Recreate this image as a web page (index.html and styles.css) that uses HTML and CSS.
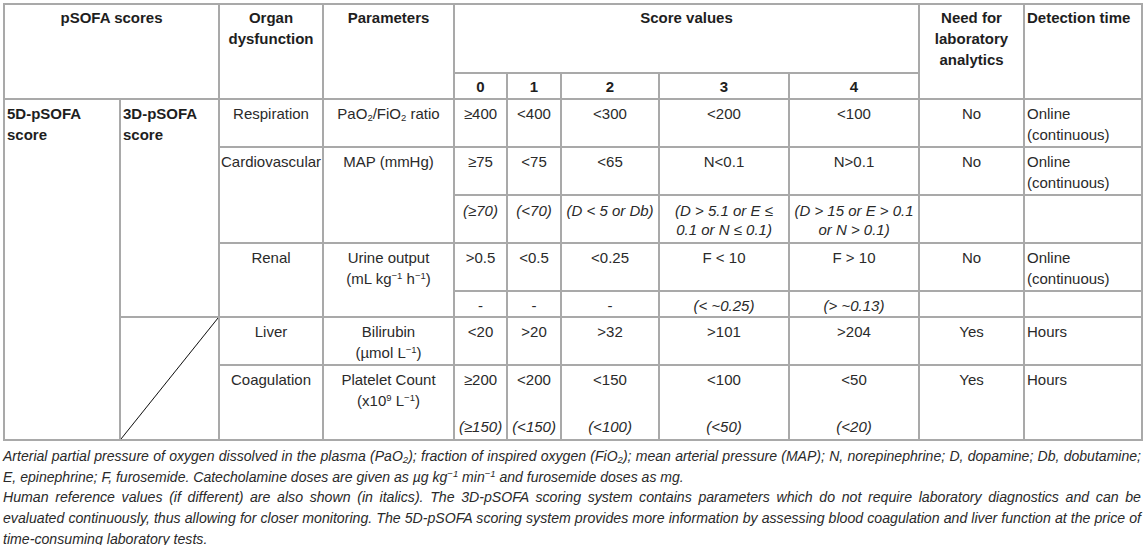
FILE: index.html
```html
<!DOCTYPE html>
<html>
<head>
<meta charset="utf-8">
<link rel="stylesheet" href="styles.css">
</head>
<body>
<table class="sofa">
  <colgroup>
    <col class="c-5d"><col class="c-3d"><col class="c-organ"><col class="c-param">
    <col class="c-s0"><col class="c-s1"><col class="c-s2"><col class="c-s3"><col class="c-s4">
    <col class="c-need"><col class="c-det">
  </colgroup>
  <thead>
    <tr class="h-top">
      <th colspan="2" rowspan="2">pSOFA scores</th>
      <th rowspan="2">Organ<br>dysfunction</th>
      <th rowspan="2">Parameters</th>
      <th colspan="5">Score values</th>
      <th rowspan="2">Need for<br>laboratory<br>analytics</th>
      <th rowspan="2" class="left">Detection time</th>
    </tr>
    <tr class="h-sub">
      <th>0</th><th>1</th><th>2</th><th>3</th><th>4</th>
    </tr>
  </thead>
  <tbody>
    <tr class="r-main">
      <td rowspan="8" class="label">5D-pSOFA<br>score</td>
      <td rowspan="5" class="label">3D-pSOFA<br>score</td>
      <td>Respiration</td>
      <td>PaO<sub>2</sub>/FiO<sub>2</sub> ratio</td>
      <td>&ge;400</td><td>&lt;400</td><td>&lt;300</td><td>&lt;200</td><td>&lt;100</td>
      <td>No</td>
      <td class="left">Online<br>(continuous)</td>
    </tr>
    <tr class="r-main">
      <td rowspan="2">Cardiovascular</td>
      <td rowspan="2">MAP (mmHg)</td>
      <td>&ge;75</td><td>&lt;75</td><td>&lt;65</td><td>N&lt;0.1</td><td>N&gt;0.1</td>
      <td>No</td>
      <td class="left">Online<br>(continuous)</td>
    </tr>
    <tr class="r-ital">
      <td class="it">(&ge;70)</td><td class="it">(&lt;70)</td><td class="it">(D &lt; 5 or Db)</td>
      <td class="it">(D &gt; 5.1 or E &le;<br>0.1 or N &le; 0.1)</td>
      <td class="it">(D &gt; 15 or E &gt; 0.1<br>or N &gt; 0.1)</td>
      <td></td><td></td>
    </tr>
    <tr class="r-main">
      <td rowspan="2">Renal</td>
      <td rowspan="2">Urine output<br>(mL kg<sup>&minus;1</sup> h<sup>&minus;1</sup>)</td>
      <td>&gt;0.5</td><td>&lt;0.5</td><td>&lt;0.25</td><td>F &lt; 10</td><td>F &gt; 10</td>
      <td>No</td>
      <td class="left">Online<br>(continuous)</td>
    </tr>
    <tr class="r-short">
      <td>-</td><td>-</td><td>-</td>
      <td class="it">(&lt; ~0.25)</td><td class="it">(&gt; ~0.13)</td>
      <td></td><td></td>
    </tr>
    <tr class="r-main">
      <td rowspan="3" class="diag"></td>
      <td>Liver</td>
      <td>Bilirubin<br>(&micro;mol L<sup>&minus;1</sup>)</td>
      <td>&lt;20</td><td>&gt;20</td><td>&gt;32</td><td>&gt;101</td><td>&gt;204</td>
      <td>Yes</td>
      <td class="left">Hours</td>
    </tr>
    <tr class="r-coag">
      <td rowspan="2">Coagulation</td>
      <td rowspan="2">Platelet Count<br>(x10<sup>9</sup> L<sup>&minus;1</sup>)</td>
      <td class="open">&ge;200</td><td class="open">&lt;200</td><td class="open">&lt;150</td><td class="open">&lt;100</td><td class="open">&lt;50</td>
      <td rowspan="2">Yes</td>
      <td rowspan="2" class="left">Hours</td>
    </tr>
    <tr class="r-short">
      <td class="it cont">(&ge;150)</td><td class="it cont">(&lt;150)</td><td class="it cont">(&lt;100)</td><td class="it cont">(&lt;50)</td><td class="it cont">(&lt;20)</td>
    </tr>
  </tbody>
</table>
<div class="notes">
  <p>Arterial partial pressure of oxygen dissolved in the plasma (PaO<sub>2</sub>); fraction of inspired oxygen (FiO<sub>2</sub>); mean arterial pressure (MAP); N, norepinephrine; D, dopamine; Db, dobutamine; E, epinephrine; F, furosemide. Catecholamine doses are given as &micro;g kg<sup>&minus;1</sup> min<sup>&minus;1</sup> and furosemide doses as mg.</p>
  <p class="p2">Human reference values (if different) are also shown (in italics). The 3D-pSOFA scoring system contains parameters which do not require laboratory diagnostics and can be evaluated continuously, thus allowing for closer monitoring. The 5D-pSOFA scoring system provides more information by assessing blood coagulation and liver function at the price of <span class="nw">time-consuming</span> laboratory tests.</p>
</div>
</body>
</html>
```

FILE: styles.css
```css
html, body {
  margin: 0;
  padding: 0;
  background: #ffffff;
}
body {
  padding: 3px 4px 0 3px;
  font-family: "Liberation Sans", Arial, sans-serif;
  color: #2a2a2a;
}
.sofa {
  border-collapse: collapse;
  table-layout: fixed;
  width: 1138px;
  font-size: 15px;
  line-height: 21px;
}
.c-5d { width: 116px; }
.c-3d { width: 99px; }
.c-organ { width: 104px; }
.c-param { width: 131px; }
.c-s0 { width: 53px; }
.c-s1 { width: 54px; }
.c-s2 { width: 98px; }
.c-s3 { width: 130px; }
.c-s4 { width: 130px; }
.c-need { width: 105px; }
.c-det { width: 118px; }
.sofa th, .sofa td {
  border: 2px solid #a9a9a9;
  padding: 3px 1px 0 1px;
  vertical-align: top;
  text-align: center;
  overflow: visible;
  white-space: nowrap;
}
.sofa th {
  font-weight: bold;
  color: #1e1e1e;
  padding-top: 2px;
}
.h-top { height: 69px; }
.h-sub { height: 26px; }
.h-sub th { padding-top: 2px; }
.r-main { height: 48px; }
.r-ital { height: 48px; }
.r-coag { height: 50px; }
.r-short { height: 25px; }
.r-ital td { padding-top: 5px; line-height: 19px; }
.sofa .left { text-align: left; padding-left: 2px; }
.sofa .label {
  text-align: left;
  font-weight: bold;
  padding-left: 2px;
  color: #1e1e1e;
}
.it { font-style: italic; }
.sofa td.open { border-bottom: none; }
.sofa td.cont { border-top: none; padding-top: 1px; }
.diag {
  background: linear-gradient(to bottom right, transparent calc(50% - 0.8px), #111 50%, transparent calc(50% + 0.8px));
}
sub, sup {
  font-size: 9.5px;
  line-height: 0;
}
sub { vertical-align: -2px; }
sup { vertical-align: 5px; }
.notes {
  font-style: italic;
  font-size: 14.05px;
  line-height: 20.7px;
  text-align: justify;
  color: #2a2a2a;
  padding-top: 5px;
  width: 1138px;
}
.notes p { margin: 0; }
.notes .p2 { font-size: 14.15px; }
.nw { white-space: nowrap; }
```
